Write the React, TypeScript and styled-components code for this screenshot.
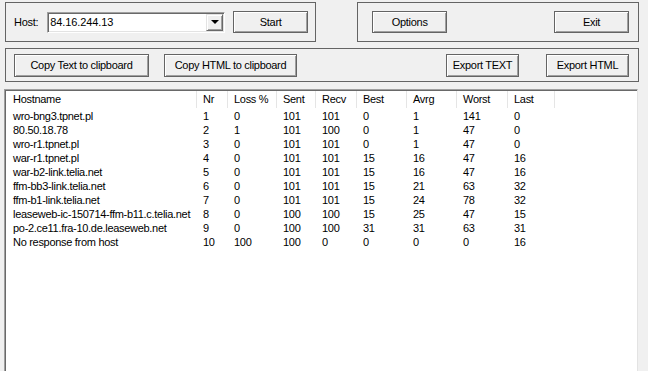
import React from 'react';
import styled, { createGlobalStyle } from 'styled-components';

const GlobalStyle = createGlobalStyle`
  html, body {
    margin: 0;
    padding: 0;
    background: #f0f0f0;
    overflow: hidden;
  }
  body {
    font-family: "Liberation Sans", Arial, sans-serif;
    font-size: 11px;
    letter-spacing: -0.3px;
    color: #000;
  }
`;

interface HopRow {
  host: string;
  nr: number;
  loss: number;
  sent: number;
  recv: number;
  best: number;
  avrg: number;
  worst: number;
  last: number;
}

const hops: HopRow[] = [
  { host: 'wro-bng3.tpnet.pl', nr: 1, loss: 0, sent: 101, recv: 101, best: 0, avrg: 1, worst: 141, last: 0 },
  { host: '80.50.18.78', nr: 2, loss: 1, sent: 101, recv: 100, best: 0, avrg: 1, worst: 47, last: 0 },
  { host: 'wro-r1.tpnet.pl', nr: 3, loss: 0, sent: 101, recv: 101, best: 0, avrg: 1, worst: 47, last: 0 },
  { host: 'war-r1.tpnet.pl', nr: 4, loss: 0, sent: 101, recv: 101, best: 15, avrg: 16, worst: 47, last: 16 },
  { host: 'war-b2-link.telia.net', nr: 5, loss: 0, sent: 101, recv: 101, best: 15, avrg: 16, worst: 47, last: 16 },
  { host: 'ffm-bb3-link.telia.net', nr: 6, loss: 0, sent: 101, recv: 101, best: 15, avrg: 21, worst: 63, last: 32 },
  { host: 'ffm-b1-link.telia.net', nr: 7, loss: 0, sent: 101, recv: 101, best: 15, avrg: 24, worst: 78, last: 32 },
  { host: 'leaseweb-ic-150714-ffm-b11.c.telia.net', nr: 8, loss: 0, sent: 100, recv: 100, best: 15, avrg: 25, worst: 47, last: 15 },
  { host: 'po-2.ce11.fra-10.de.leaseweb.net', nr: 9, loss: 0, sent: 100, recv: 100, best: 31, avrg: 31, worst: 63, last: 31 },
  { host: 'No response from host', nr: 10, loss: 100, sent: 100, recv: 0, best: 0, avrg: 0, worst: 0, last: 16 },
];

const columns = ['Hostname', 'Nr', 'Loss %', 'Sent', 'Recv', 'Best', 'Avrg', 'Worst', 'Last'];
const GRID = '191px 31px 49px 39px 41px 50px 50px 51px 47px 1fr';

const Window = styled.div`
  display: flex;
  flex-direction: column;
  width: 648px;
  height: 371px;
  padding: 2px 9px 0 5px;
  box-sizing: border-box;
`;

const TopRow = styled.div`
  display: flex;
  gap: 41px;
  height: 40px;
`;

const Panel = styled.div<{ $width?: number; $padLeft: number; $padRight: number; $spread?: boolean }>`
  display: flex;
  align-items: center;
  justify-content: ${p => (p.$spread ? 'space-between' : 'flex-start')};
  box-sizing: border-box;
  border: 1px solid #646464;
  flex: ${p => (p.$width ? `0 0 ${p.$width}px` : '1')};
  padding: 0 ${p => p.$padRight}px 0 ${p => p.$padLeft}px;
`;

const ActionRow = styled(Panel)`
  height: 34px;
  margin-top: 6px;
  flex: none;
`;

const Label = styled.span`
  margin-right: 9px;
  font-size: 11px;
`;

const Combo = styled.div`
  display: flex;
  width: 178px;
  height: 21px;
  box-sizing: border-box;
  background: #fff;
  border-top: 1px solid #a0a0a0;
  border-left: 1px solid #a0a0a0;
  border-right: 1px solid #fff;
  border-bottom: 1px solid #fff;
  box-shadow: inset 1px 1px 0 #696969, inset -1px -1px 0 #e3e3e3;
  padding: 1px;
  margin-right: 8px;
`;

const ComboText = styled.div`
  flex: 1;
  padding-left: 1px;
  line-height: 17px;
  letter-spacing: -0.1px;
`;

const DropButton = styled.div`
  width: 17px;
  height: 17px;
  box-sizing: border-box;
  background: #f0f0f0;
  border-top: 1px solid #e3e3e3;
  border-left: 1px solid #e3e3e3;
  border-right: 1px solid #696969;
  border-bottom: 1px solid #696969;
  box-shadow: inset 1px 1px 0 #fff, inset -1px -1px 0 #a0a0a0;
  display: flex;
  align-items: center;
  justify-content: center;
`;

const Arrow = styled.div`
  width: 0;
  height: 0;
  border-left: 4px solid transparent;
  border-right: 4px solid transparent;
  border-top: 4px solid #000;
`;

const Button = styled.div<{ $w: number; $h?: number }>`
  width: ${p => p.$w}px;
  height: ${p => p.$h ?? 23}px;
  box-sizing: border-box;
  border: 1px solid #646464;
  background: #f0f0f0;
  box-shadow: inset 1px 1px 0 #fff, inset -1px -1px 0 #a0a0a0;
  display: flex;
  align-items: center;
  justify-content: center;
  flex: none;
`;

const Spacer = styled.div<{ $w: number }>`
  width: ${p => p.$w}px;
  flex: none;
`;

const Grow = styled.div`
  flex: 1;
`;

const ListView = styled.div`
  margin-top: 7px;
  margin-left: -1px;
  margin-right: 1px;
  flex: 1;
  background: #fff;
  border-top: 1px solid #a0a0a0;
  border-left: 1px solid #a0a0a0;
  border-right: 1px solid #e3e3e3;
  box-shadow: inset 1px 1px 0 #696969;
  padding: 1px 0 0 1px;
`;

const HeaderRow = styled.div`
  display: grid;
  grid-template-columns: ${GRID};
  height: 17px;
  margin-bottom: 1px;
`;

const HeaderCell = styled.div<{ $first?: boolean; $last?: boolean }>`
  padding-left: ${p => (p.$first ? 7 : 6)}px;
  line-height: 17px;
  border-right: ${p => (p.$last ? 'none' : '1px solid #e5e5e5')};
  white-space: nowrap;
`;

const DataRow = styled.div`
  display: grid;
  grid-template-columns: ${GRID};
  height: 14px;
`;

const Cell = styled.div<{ $first?: boolean }>`
  padding-left: ${p => (p.$first ? 7 : 6)}px;
  line-height: 14px;
  white-space: nowrap;
`;

const App: React.FC = () => {
  return (
    <>
      <GlobalStyle />
      <Window>
        <TopRow>
          <Panel $width={311} $padLeft={8} $padRight={7}>
            <Label>Host:</Label>
            <Combo>
              <ComboText>84.16.244.13</ComboText>
              <DropButton>
                <Arrow />
              </DropButton>
            </Combo>
            <Button $w={75} $h={22}>Start</Button>
          </Panel>
          <Panel $padLeft={14} $padRight={9} $spread>
            <Button $w={75} $h={22}>Options</Button>
            <Button $w={75} $h={22}>Exit</Button>
          </Panel>
        </TopRow>

        <ActionRow $padLeft={8} $padRight={9}>
          <Button $w={135}>Copy Text to clipboard</Button>
          <Spacer $w={15} />
          <Button $w={133}>Copy HTML to clipboard</Button>
          <Grow />
          <Button $w={73}>Export TEXT</Button>
          <Spacer $w={27} />
          <Button $w={83}>Export HTML</Button>
        </ActionRow>

        <ListView>
          <HeaderRow>
            {columns.map((c, i) => (
              <HeaderCell key={c} $first={i === 0}>{c}</HeaderCell>
            ))}
            <HeaderCell $last />
          </HeaderRow>
          {hops.map(h => (
            <DataRow key={h.nr}>
              <Cell $first>{h.host}</Cell>
              <Cell>{h.nr}</Cell>
              <Cell>{h.loss}</Cell>
              <Cell>{h.sent}</Cell>
              <Cell>{h.recv}</Cell>
              <Cell>{h.best}</Cell>
              <Cell>{h.avrg}</Cell>
              <Cell>{h.worst}</Cell>
              <Cell>{h.last}</Cell>
              <Cell />
            </DataRow>
          ))}
        </ListView>
      </Window>
    </>
  );
};

export default App;
